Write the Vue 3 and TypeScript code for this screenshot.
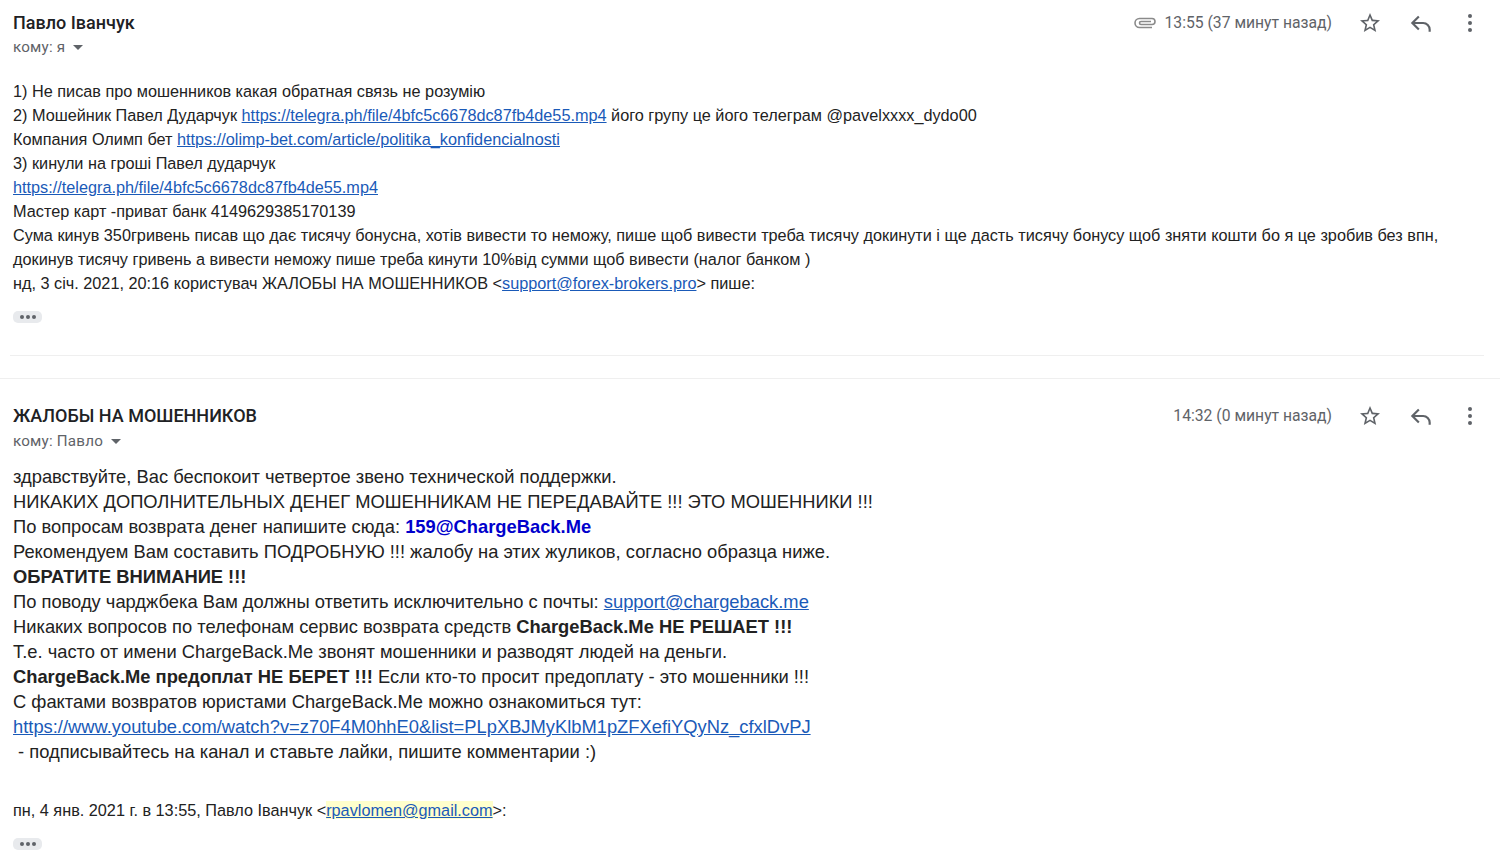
<script setup lang="ts">
const telegram = 'https://telegra.ph/file/4bfc5c6678dc87fb4de55.mp4'
</script>

<template>
  <main class="page">
    <section class="message first">
      <header class="head">
        <div class="who">
          <div class="name">Павло Іванчук</div>
          <div class="to">кому: я <span class="caret"></span></div>
        </div>
        <div class="meta">
          <svg class="clip" width="24" height="24" viewBox="0 0 24 24" fill="none" stroke="#8a8a8a" stroke-width="1.6">
            <path d="M19 16.5H6.5a4.5 4.5 0 0 1 0-9H19a3 3 0 0 1 0 6H8a1.5 1.5 0 0 1 0-3h10" />
          </svg>
          <span class="time">13:55 (37 минут назад)</span>
          <div class="actions">
            <svg class="icon" width="24" height="24" viewBox="0 0 24 24" fill="#5f6368"><path d="M22 9.24l-7.19-.62L12 2 9.19 8.63 2 9.24l5.46 4.73L5.82 21 12 17.27 18.18 21l-1.63-7.03L22 9.24zM12 15.4l-3.76 2.27 1-4.28-3.32-2.88 4.38-.38L12 6.1l1.71 4.04 4.38.38-3.32 2.88 1 4.28L12 15.4z"/></svg>
            <svg class="icon" width="26" height="26" viewBox="0 0 24 24" fill="none" stroke="#5f6368" stroke-width="2"><path d="M10 6l-6 6 6 6M4 12h10a6 6 0 0 1 6 6v2" /></svg>
            <svg class="icon dots" width="24" height="24" viewBox="0 0 24 24" fill="#5f6368"><circle cx="12" cy="5" r="2"/><circle cx="12" cy="12" r="2"/><circle cx="12" cy="19" r="2"/></svg>
          </div>
        </div>
      </header>
      <div class="body small">
        <div>1) Не писав про мошенников какая обратная связь не розумію</div>
        <div>2) Мошейник Павел Дударчук <a>{{ telegram }}</a> його групу це його телеграм @pavelxxxx_dydo00</div>
        <div>Компания Олимп бет <a>https://olimp-bet.com/article/politika_konfidencialnosti</a></div>
        <div>3) кинули на гроші Павел дударчук</div>
        <div><a>{{ telegram }}</a></div>
        <div>Мастер карт -приват банк 4149629385170139</div>
        <div>Сума кинув 350гривень писав що дає тисячу бонусна, хотів вивести то неможу, пише щоб вивести треба тисячу докинути і ще дасть тисячу бонусу щоб зняти кошти бо я це зробив без впн,</div>
        <div>докинув тисячу гривень а вивести неможу пише треба кинути 10%від сумми щоб вивести (налог банком )</div>
        <div>нд, 3 січ. 2021, 20:16 користувач ЖАЛОБЫ НА МОШЕННИКОВ &lt;<a>support@forex-brokers.pro</a>&gt; пише:</div>
      </div>
      <div class="more"><i></i><i></i><i></i></div>
    </section>
    <div class="rule inner"></div>
    <div class="rule outer"></div>
    <section class="message second">
      <header class="head">
        <div class="who">
          <div class="name">ЖАЛОБЫ НА МОШЕННИКОВ</div>
          <div class="to">кому: Павло <span class="caret"></span></div>
        </div>
        <div class="meta">
          <span class="time">14:32 (0 минут назад)</span>
          <div class="actions">
            <svg class="icon" width="24" height="24" viewBox="0 0 24 24" fill="#5f6368"><path d="M22 9.24l-7.19-.62L12 2 9.19 8.63 2 9.24l5.46 4.73L5.82 21 12 17.27 18.18 21l-1.63-7.03L22 9.24zM12 15.4l-3.76 2.27 1-4.28-3.32-2.88 4.38-.38L12 6.1l1.71 4.04 4.38.38-3.32 2.88 1 4.28L12 15.4z"/></svg>
            <svg class="icon" width="26" height="26" viewBox="0 0 24 24" fill="none" stroke="#5f6368" stroke-width="2"><path d="M10 6l-6 6 6 6M4 12h10a6 6 0 0 1 6 6v2" /></svg>
            <svg class="icon dots" width="24" height="24" viewBox="0 0 24 24" fill="#5f6368"><circle cx="12" cy="5" r="2"/><circle cx="12" cy="12" r="2"/><circle cx="12" cy="19" r="2"/></svg>
          </div>
        </div>
      </header>
      <div class="body large">
        <div>здравствуйте, Вас беспокоит четвертое звено технической поддержки.</div>
        <div>НИКАКИХ ДОПОЛНИТЕЛЬНЫХ ДЕНЕГ МОШЕННИКАМ НЕ ПЕРЕДАВАЙТЕ !!! ЭТО МОШЕННИКИ !!!</div>
        <div>По вопросам возврата денег напишите сюда: <b class="blue">159@ChargeBack.Me</b></div>
        <div>Рекомендуем Вам составить ПОДРОБНУЮ !!! жалобу на этих жуликов, согласно образца ниже.</div>
        <div><b>ОБРАТИТЕ ВНИМАНИЕ !!!</b></div>
        <div>По поводу чарджбека Вам должны ответить исключительно с почты: <a>support@chargeback.me</a></div>
        <div>Никаких вопросов по телефонам сервис возврата средств <b>ChargeBack.Me НЕ РЕШАЕТ !!!</b></div>
        <div>Т.е. часто от имени ChargeBack.Me звонят мошенники и разводят людей на деньги.</div>
        <div><b>ChargeBack.Me предоплат НЕ БЕРЕТ !!!</b> Если кто-то просит предоплату - это мошенники !!!</div>
        <div>С фактами возвратов юристами ChargeBack.Me можно ознакомиться тут:</div>
        <div><a>https://www.youtube.com/watch?v=z70F4M0hhE0&amp;list=PLpXBJMyKlbM1pZFXefiYQyNz_cfxlDvPJ</a></div>
        <div>&nbsp;- подписывайтесь на канал и ставьте лайки, пишите комментарии :)</div>
      </div>
      <div class="quote small">пн, 4 янв. 2021 г. в 13:55, Павло Іванчук &lt;<a class="marked">rpavlomen@gmail.com</a>&gt;:</div>
      <div class="more"><i></i><i></i><i></i></div>
    </section>
  </main>
</template>

<style scoped>
.page {
  width: 1500px;
  height: 859px;
  overflow: hidden;
  background: #fff;
  color: #222;
  font-family: "Liberation Sans", Arial, sans-serif;
}

.message {
  padding: 0 13px;
}

.head {
  display: flex;
  justify-content: space-between;
  box-sizing: border-box;
}

.first .head {
  height: 79px;
  padding-top: 12px;
}

.second .head {
  height: 85px;
  padding-top: 26px;
}

.name {
  font-family: Roboto, sans-serif;
  font-weight: 500;
  font-size: 18px;
  line-height: 22px;
  color: #202124;
}

.to {
  margin-top: 4px;
  font-family: Roboto, sans-serif;
  font-size: 15.2px;
  line-height: 18px;
  color: #5f6368;
  letter-spacing: 0.2px;
}

.second .to {
  margin-top: 5px;
}

.caret {
  display: inline-block;
  margin-left: 4px;
  vertical-align: middle;
  border-left: 5px solid transparent;
  border-right: 5px solid transparent;
  border-top: 5px solid #5f6368;
}

.meta {
  display: flex;
  align-items: center;
  height: 21px;
  margin-right: 5px;
}

.clip {
  margin-right: 8px;
}

.time {
  font-family: Roboto, sans-serif;
  font-size: 15.7px;
  color: #5f6368;
}

.actions {
  display: flex;
  align-items: center;
  gap: 26px;
  margin-left: 26px;
}

.dots {
  margin-left: -2px;
}

.body a,
.quote a {
  color: #1a5ab8;
  text-decoration: underline;
}

.small {
  font-size: 16.25px;
  line-height: 24px;
}

.large {
  font-size: 18.33px;
  line-height: 25px;
}

.blue {
  color: #0000cc;
}

.more {
  display: flex;
  align-items: center;
  justify-content: center;
  gap: 2px;
  width: 29px;
  height: 12px;
  border-radius: 5px;
  background: #e8eaed;
}

.more i {
  width: 4px;
  height: 4px;
  border-radius: 50%;
  background: #5f6368;
}

.first .more {
  margin-top: 16px;
}

.rule {
  height: 1px;
  background: #efefef;
}

.rule.inner {
  margin: 32px 16px 0 10px;
}

.rule.outer {
  margin-top: 22px;
}

.quote {
  margin-top: 34px;
}

.quote + .more {
  margin-top: 16px;
}

.marked {
  background: #ffffcc;
}
</style>

<style>
html,
body {
  margin: 0;
  background: #fff;
}
</style>
